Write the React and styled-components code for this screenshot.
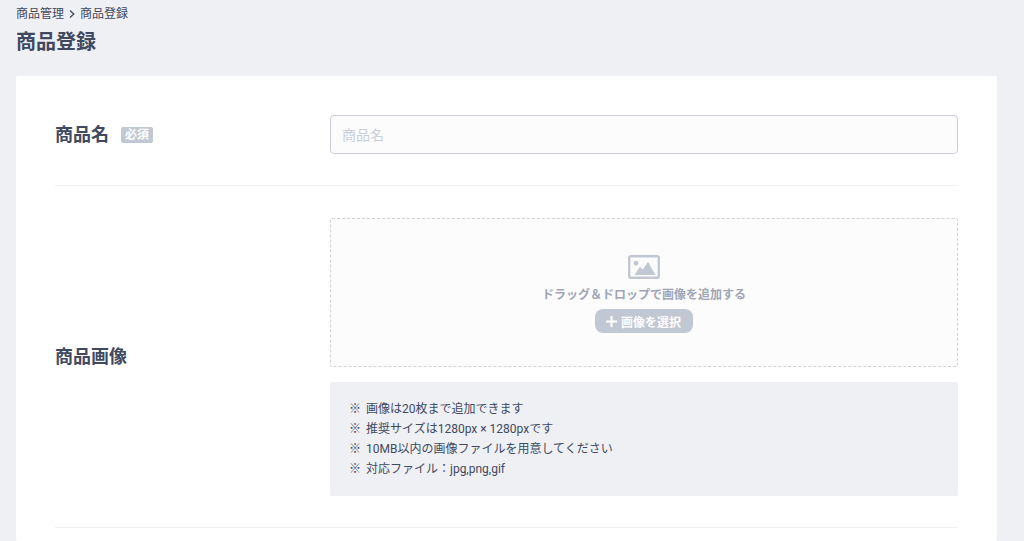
import { useRef, useState } from "react";
import styled, { createGlobalStyle } from "styled-components";

const GlobalStyle = createGlobalStyle`
  * {
    box-sizing: border-box;
  }

  body {
    margin: 0;
    color: #404960;
    background: #eff0f4;
    font-family: Roboto, "Noto Sans CJK JP", sans-serif;
    font-size: 12px;
  }
`;

const Page = styled.main`
  min-height: 100vh;
  padding: 5px 27px 0 16px;

  display: flex;
  flex-direction: column;
`;

// パンくずリスト
const Breadcrumb = styled.nav`
  display: flex;
  align-items: center;
  gap: 5px;
  line-height: 18px;
`;

const BreadcrumbLink = styled.a`
  color: inherit;
  text-decoration: none;

  &:hover {
    text-decoration: underline;
  }
`;

const PageTitle = styled.h1`
  margin: 5px 0 20px;
  font-size: 20px;
  line-height: 28px;
  font-weight: 700;
`;

const Card = styled.form`
  flex: 1;
  padding: 7px 39px 0;
  background: #ffffff;
  border-radius: 2px;
`;

const Row = styled.div`
  display: grid;
  grid-template-columns: 275px 1fr;
  align-items: center;
  padding: 32px 0 31px;
  border-bottom: 1px solid #f0f1f4;
`;

const LabelArea = styled.div`
  display: flex;
  align-items: center;
  gap: 12px;
`;

const Label = styled.label`
  font-size: 18px;
  line-height: 26px;
  font-weight: 700;
`;

// 必須バッジ
const Required = styled.span`
  padding: 0 4px;
  color: #ffffff;
  background: #c1c8d3;
  border-radius: 2px;
  line-height: 16px;
  font-weight: 700;
`;

const TextInput = styled.input`
  width: 100%;
  height: 39px;
  padding: 0 11px;
  color: inherit;
  background: #fcfcfc;
  border: 1px solid #cbcfd9;
  border-radius: 4px;
  font-family: inherit;
  font-size: 14px;

  &::placeholder {
    color: #c8cedb;
  }
`;

const Field = styled.div`
  display: flex;
  flex-direction: column;
  gap: 15px;
`;

// 画像のドロップエリア
const DropArea = styled.div`
  height: 149px;
  background: ${({ $active }) => ($active ? "#f2f4f8" : "#fcfcfc")};
  border: 1px dashed #cfd2da;
  border-radius: 2px;

  display: flex;
  flex-direction: column;
  align-items: center;
  padding-top: 36px;
`;

const DropText = styled.p`
  margin: 7px 0 5px;
  color: #9ea6b6;
  line-height: 18px;
  font-weight: 700;
`;

const SelectButton = styled.button`
  height: 24px;
  padding: 0 12px 0 11px;
  color: #ffffff;
  background: #c1c8d3;
  border: 0;
  border-radius: 8px;
  font-family: inherit;
  font-size: 12px;
  font-weight: 700;

  display: flex;
  align-items: center;
  gap: 4px;

  &:hover {
    background: #aeb6c3;
  }
`;

const Notes = styled.ul`
  margin: 0;
  padding: 17px 19px;
  list-style: none;
  background: #eff0f4;
  border-radius: 2px;
`;

const Note = styled.li`
  display: flex;
  gap: 5px;
  line-height: 20px;
`;

const ChevronIcon = () => (
  <svg width="6" height="8" viewBox="0 0 6 8" fill="none" aria-hidden="true">
    <path d="M1 0.5 L4.8 4 L1 7.5" stroke="currentColor" strokeWidth="1.3" />
  </svg>
);

const ImageIcon = () => (
  <svg width="32" height="24" viewBox="0 0 32 24" aria-hidden="true">
    <rect x="1.2" y="1.2" width="29.6" height="21.6" rx="1.5" fill="none" stroke="#c1c8d3" strokeWidth="2.4" />
    <circle cx="8" cy="8.2" r="2.4" fill="#c1c8d3" />
    <path d="M6.5 20 L12 11.5 L14.8 14.8 L20 6.8 L27.5 20 Z" fill="#c1c8d3" />
  </svg>
);

const PlusIcon = () => (
  <svg width="11" height="11" viewBox="0 0 11 11" aria-hidden="true">
    <path d="M5.5 0 V11 M0 5.5 H11" stroke="currentColor" strokeWidth="2" />
  </svg>
);

const notes = [
  "画像は20枚まで追加できます",
  "推奨サイズは1280px × 1280pxです",
  "10MB以内の画像ファイルを用意してください",
  "対応ファイル：jpg,png,gif",
];

const App = () => {
  const [name, setName] = useState("");
  const [dragging, setDragging] = useState(false);
  const fileRef = useRef(null);

  const dropHandler = (e) => {
    e.preventDefault();
    setDragging(false);
    fileRef.current.files = e.dataTransfer.files;
  };

  const dragOverHandler = (e) => {
    e.preventDefault();
    setDragging(true);
  };

  return (
    <>
      <GlobalStyle />
      <Page>
        <Breadcrumb>
          <BreadcrumbLink href="#products">商品管理</BreadcrumbLink>
          <ChevronIcon />
          <BreadcrumbLink href="#register">商品登録</BreadcrumbLink>
        </Breadcrumb>
        <PageTitle>商品登録</PageTitle>

        <Card onSubmit={(e) => e.preventDefault()}>
          <Row>
            <LabelArea>
              <Label htmlFor="name">商品名</Label>
              <Required>必須</Required>
            </LabelArea>
            <TextInput
              id="name"
              type="text"
              placeholder="商品名"
              value={name}
              onChange={(e) => setName(e.target.value)}
            />
          </Row>

          <Row>
            <Label htmlFor="images">商品画像</Label>
            <Field>
              <DropArea
                $active={dragging}
                onDragOver={dragOverHandler}
                onDragLeave={() => setDragging(false)}
                onDrop={dropHandler}
              >
                <ImageIcon />
                <DropText>ドラッグ＆ドロップで画像を追加する</DropText>
                <SelectButton type="button" onClick={() => fileRef.current.click()}>
                  <PlusIcon />
                  画像を選択
                </SelectButton>
                <input ref={fileRef} id="images" type="file" accept=".jpg,.png,.gif" multiple hidden />
              </DropArea>
              <Notes>
                {notes.map((note) => (
                  <Note key={note}>
                    <span>※</span>
                    {note}
                  </Note>
                ))}
              </Notes>
            </Field>
          </Row>
        </Card>
      </Page>
    </>
  );
};

export default App;
